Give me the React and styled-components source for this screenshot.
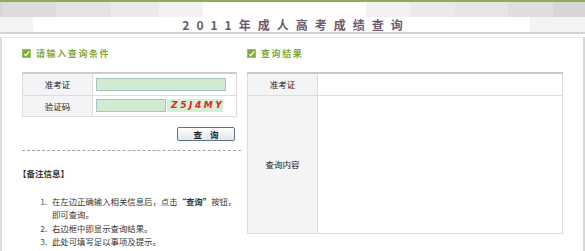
import React from "react";
import styled, { createGlobalStyle } from "styled-components";

const Global = createGlobalStyle`
  html, body { margin: 0; padding: 0; background: #fff; }
  body { font-family: "Noto Sans CJK SC", "Noto Sans", sans-serif; color: #333; }
`;

const Page = styled.div`
  width: 585px;
  height: 251px;
  overflow: hidden;
`;

const TopLine = styled.div`
  height: 2px;
  background: #8fab5c;
`;

const Band = styled.div`
  height: 15px;
  background: linear-gradient(
    to right,
    #d6d6d6 0, #d6d6d6 3px,
    #dcdcdc 3px, #dcdcdc 56px,
    #e3e3e3 56px, #e3e3e3 111px,
    #eaeaea 111px, #eaeaea 159px,
    #f2f2f2 159px, #f2f2f2 203px,
    #ffffff 203px, #ffffff 366px,
    #f2f2f2 366px, #f2f2f2 410px,
    #eaeaea 410px, #eaeaea 455px,
    #e5e5e5 455px, #e5e5e5 508px,
    #dedede 508px, #dedede 553px,
    #d6d6d6 553px
  );
`;

const TitleRow = styled.div`
  height: 15px;
  display: flex;
  align-items: center;
  justify-content: center;
  background: linear-gradient(
    to right,
    #f3f2f4 0, #f3f2f4 33px,
    #fff 33px, #fff 530px,
    #f3f2f4 530px
  );
  border-bottom: 2px solid #d4d4d4;
`;

const Title = styled.h1`
  margin: 0 0 0 7px;
  font-size: 12px;
  font-weight: bold;
  letter-spacing: 7px;
  color: #6b5a6e;
  line-height: 15px;
`;

const Content = styled.div`
  margin-top: 3px;
  height: 214px;
  border-left: 2px solid #dcdcdc;
  border-right: 2px solid #d6d6d6;
  border-top: 1px solid #ececec;
  padding: 10px 18px 0 20px;
  display: grid;
  grid-template-columns: 215px 316px;
  column-gap: 10px;
  align-items: start;
`;

const Panel = styled.div`
  display: flex;
  flex-direction: column;
`;

const Heading = styled.div`
  display: flex;
  align-items: center;
  gap: 5px;
  height: 10px;
  font-size: 9px;
  font-weight: bold;
  letter-spacing: 1.6px;
  color: #84a83e;
  margin-bottom: 14px;
`;

const CheckIcon = () => (
  <svg width="9" height="9" viewBox="0 0 9 9">
    <rect x="0" y="0" width="9" height="9" fill="#7fab3a" />
    <rect x="0.5" y="0.5" width="8" height="8" fill="none" stroke="#9cc25a" strokeWidth="1" />
    <path d="M2.3 5.2 L3.8 6.6 L7.2 2.4" fill="none" stroke="#fff" strokeWidth="1.3" />
  </svg>
);

const Table = styled.table`
  width: 100%;
  border-collapse: collapse;
  border: 1px solid #dcdcdc;
  border-top: 2px solid #cdcdcd;
  font-size: 8.5px;
`;

const Row = styled.tr`
  height: ${p => p.$h}px;
`;

const Label = styled.td`
  width: 69px;
  background: #f4f3f5;
  border: 1px solid #dcdcdc;
  text-align: center;
  padding: 0;
  color: #222;
`;

const Cell = styled.td`
  border: 1px solid #dcdcdc;
  padding: 0 0 0 3px;
  background: #fff;
`;

const FieldRow = styled.div`
  display: flex;
  align-items: center;
  gap: 1px;
`;

const Input = styled.div`
  box-sizing: border-box;
  width: ${p => p.$w}px;
  height: 13px;
  background: #d2e9d2;
  border: 1px solid #a9c2c4;
`;

const Captcha = styled.div`
  box-sizing: border-box;
  width: 56px;
  height: 13px;
  background: #d6edd6;
  color: #e0262a;
  font-family: "DejaVu Sans", sans-serif;
  font-style: italic;
  font-weight: bold;
  font-size: 9px;
  letter-spacing: 2.6px;
  line-height: 13px;
  padding-left: 4px;
`;

const ButtonRow = styled.div`
  display: flex;
  justify-content: flex-end;
  padding-right: 2px;
  margin-top: 10px;
`;

const Button = styled.button`
  box-sizing: border-box;
  width: 58px;
  height: 14px;
  padding: 0;
  border: 1px solid #5b6f8c;
  border-radius: 2px;
  background: linear-gradient(#ffffff, #e6e6e6);
  font-family: "Noto Sans CJK SC", sans-serif;
  font-size: 8.5px;
  font-weight: bold;
  letter-spacing: 8px;
  line-height: 12px;
  color: #222;
  text-indent: 8px;
`;

const Divider = styled.div`
  margin-top: 9px;
  margin-right: -4px;
  border-top: 1px dashed #a5a5a5;
`;

const NoteTitle = styled.div`
  margin: 16px 0 0 -4px;
  font-size: 8.5px;
  font-weight: bold;
  color: #333;
`;

const List = styled.ol`
  margin: 16px -6px 0 0;
  padding: 0 0 0 27px;
  font-size: 8.4px;
  line-height: 13.5px;
  color: #333;
  white-space: nowrap;
  li { padding-left: 3px; }
  li::marker { color: #555; }
`;

const ResultTable = styled(Table)`
  border-top: 2px solid #c8c8c8;
`;

export default function App() {
  return (
    <Page>
      <Global />
      <TopLine />
      <Band />
      <TitleRow>
        <Title>2011年成人高考成绩查询</Title>
      </TitleRow>
      <Content>
        <Panel>
          <Heading>
            <CheckIcon />
            <span>请输入查询条件</span>
          </Heading>
          <Table>
            <tbody>
              <Row $h={22}>
                <Label>准考证</Label>
                <Cell>
                  <Input $w={130} />
                </Cell>
              </Row>
              <Row $h={21}>
                <Label>验证码</Label>
                <Cell>
                  <FieldRow>
                    <Input $w={70} />
                    <Captcha>Z5J4MY</Captcha>
                  </FieldRow>
                </Cell>
              </Row>
            </tbody>
          </Table>
          <ButtonRow>
            <Button type="button">查询</Button>
          </ButtonRow>
          <Divider />
          <NoteTitle>【备注信息】</NoteTitle>
          <List>
            <li>
              在左边正确输入相关信息后，点击<b>“查询”</b>按钮，
              <br />
              即可查询。
            </li>
            <li>右边框中即显示查询结果。</li>
            <li>此处可填写足以事项及提示。</li>
          </List>
        </Panel>
        <Panel>
          <Heading>
            <CheckIcon />
            <span>查询结果</span>
          </Heading>
          <ResultTable>
            <tbody>
              <Row $h={22}>
                <Label>准考证</Label>
                <Cell />
              </Row>
              <Row $h={138}>
                <Label>查询内容</Label>
                <Cell />
              </Row>
            </tbody>
          </ResultTable>
        </Panel>
      </Content>
    </Page>
  );
}
